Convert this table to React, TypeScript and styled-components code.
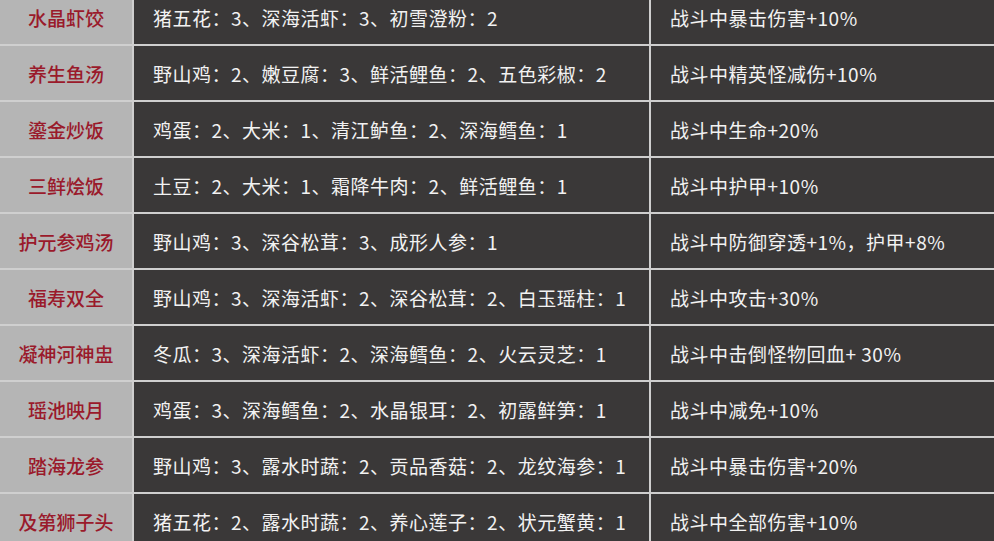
import { Fragment } from "react";
import styled, { createGlobalStyle } from "styled-components";

const GlobalStyle = createGlobalStyle`
  html, body {
    margin: 0;
    padding: 0;
    background: #3a3838;
    overflow: hidden;
  }
`;

const Page = styled.div`
  width: 994px;
  height: 541px;
  overflow: hidden;
  background: #3a3838;
  font-family: "Noto Sans CJK SC", "Noto Sans", sans-serif;
`;

const Table = styled.div`
  margin-top: -10px;
  display: grid;
  grid-template-columns: 132px 515px 1fr;
  column-gap: 2px;
  row-gap: 2px;
  background: #cfcfcf;
`;

const NameCell = styled.div`
  height: 54px;
  background: #b5b5b5;
  color: #9a1a2b;
  font-size: 19px;
  font-weight: 500;
  display: flex;
  align-items: center;
  justify-content: center;
  white-space: nowrap;
`;

const TextCell = styled.div`
  height: 54px;
  background: #3a3838;
  color: #f2f2f2;
  font-size: 19px;
  letter-spacing: 0.5px;
  display: flex;
  align-items: center;
  padding-left: 19px;
  white-space: nowrap;
`;

const rows = [
  ["水晶虾饺", "猪五花：3、深海活虾：3、初雪澄粉：2", "战斗中暴击伤害+10%"],
  ["养生鱼汤", "野山鸡：2、嫩豆腐：3、鲜活鲤鱼：2、五色彩椒：2", "战斗中精英怪减伤+10%"],
  ["鎏金炒饭", "鸡蛋：2、大米：1、清江鲈鱼：2、深海鳕鱼：1", "战斗中生命+20%"],
  ["三鲜烩饭", "土豆：2、大米：1、霜降牛肉：2、鲜活鲤鱼：1", "战斗中护甲+10%"],
  ["护元参鸡汤", "野山鸡：3、深谷松茸：3、成形人参：1", "战斗中防御穿透+1%，护甲+8%"],
  ["福寿双全", "野山鸡：3、深海活虾：2、深谷松茸：2、白玉瑶柱：1", "战斗中攻击+30%"],
  ["凝神河神盅", "冬瓜：3、深海活虾：2、深海鳕鱼：2、火云灵芝：1", "战斗中击倒怪物回血+ 30%"],
  ["瑶池映月", "鸡蛋：3、深海鳕鱼：2、水晶银耳：2、初露鲜笋：1", "战斗中减免+10%"],
  ["踏海龙参", "野山鸡：3、露水时蔬：2、贡品香菇：2、龙纹海参：1", "战斗中暴击伤害+20%"],
  ["及第狮子头", "猪五花：2、露水时蔬：2、养心莲子：2、状元蟹黄：1", "战斗中全部伤害+10%"],
];

export default function App() {
  return (
    <Page>
      <GlobalStyle />
      <Table>
        {rows.map(([name, recipe, effect]) => (
          <Fragment key={name}>
            <NameCell>{name}</NameCell>
            <TextCell>{recipe}</TextCell>
            <TextCell>{effect}</TextCell>
          </Fragment>
        ))}
      </Table>
    </Page>
  );
}
